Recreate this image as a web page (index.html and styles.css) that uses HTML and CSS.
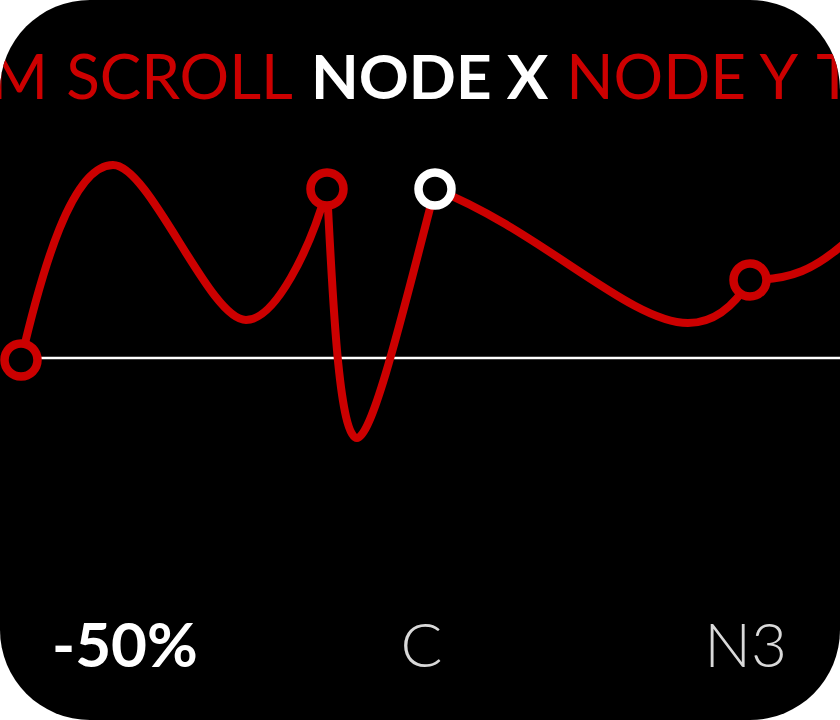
FILE: index.html
```html
<!DOCTYPE html>
<html lang="en">
<head>
<meta charset="utf-8">
<title>Node editor</title>
<link rel="stylesheet" href="styles.css">
</head>
<body>
<main class="screen">
  <nav class="ticker">
    <div class="ticker-track">
      <span class="tab">ZOOM</span>
      <span class="tab">SCROLL</span>
      <span class="tab tab-active">NODE X</span>
      <span class="tab">NODE Y</span>
      <span class="tab">TIME</span>
    </div>
  </nav>
  <section class="chart">
    <svg class="curve" viewBox="0 130 840 340" width="840" height="340" aria-hidden="true">
      <line class="axis" x1="21" y1="358" x2="840" y2="358"/>
      <path class="spline" d="M21,360 C42,270 72,165 113,165 C150,165 209,320 246,320 C275,320 310,250 327,189 C332,280 338,438 357,438 C373,438 406,300 435,189 C540,230 630,323 688,323 C715,323 735,305 750,280 C790,280 815,270 848,240"/>
      <circle class="node" cx="21" cy="360" r="16.5"/>
      <circle class="node" cx="327" cy="189" r="16.5"/>
      <circle class="node node-active" cx="435" cy="189" r="16.5"/>
      <circle class="node" cx="750" cy="280" r="16.5"/>
    </svg>
  </section>
  <footer class="status">
    <span class="status-value">-50%</span>
    <span class="status-mode">C</span>
    <span class="status-node">N3</span>
  </footer>
</main>
</body>
</html>
```

FILE: styles.css
```css
html, body {
  margin: 0;
  padding: 0;
  background: #ffffff;
}

body {
  font-family: "Lato", "Noto Sans", "Liberation Sans", sans-serif;
}

.screen {
  width: 840px;
  height: 720px;
  background: #000000;
  border-radius: 90px;
  overflow: hidden;
  display: flex;
  flex-direction: column;
}

.ticker {
  height: 130px;
  overflow: hidden;
  flex: none;
}

.ticker-track {
  display: flex;
  gap: 18px;
  white-space: nowrap;
  margin-left: -145px;
  padding-top: 39px;
  font-size: 62px;
  line-height: 72px;
  color: #cc0000;
  font-weight: 400;
}

.tab-active {
  color: #ffffff;
  font-weight: 700;
}

.chart {
  height: 340px;
  flex: none;
}

.curve {
  display: block;
}

.axis {
  stroke: #ffffff;
  stroke-width: 2.5;
}

.spline {
  fill: none;
  stroke: #cc0000;
  stroke-width: 8;
  stroke-linejoin: round;
  stroke-linecap: round;
}

.node {
  fill: #000000;
  stroke: #cc0000;
  stroke-width: 8.5;
}

.node-active {
  stroke: #ffffff;
}

.status {
  flex: 1;
  display: grid;
  grid-template-columns: 1fr auto 1fr;
  align-items: start;
  padding: 137px 53px 0 56px;
  font-size: 62px;
  line-height: 72px;
}

.status-value {
  justify-self: start;
  margin-left: -4px;
  color: #ffffff;
  font-weight: 700;
}

.status-mode {
  justify-self: center;
  color: #d9d9d9;
  font-weight: 300;
}

.status-node {
  justify-self: end;
  color: #d9d9d9;
  font-weight: 300;
}
```
